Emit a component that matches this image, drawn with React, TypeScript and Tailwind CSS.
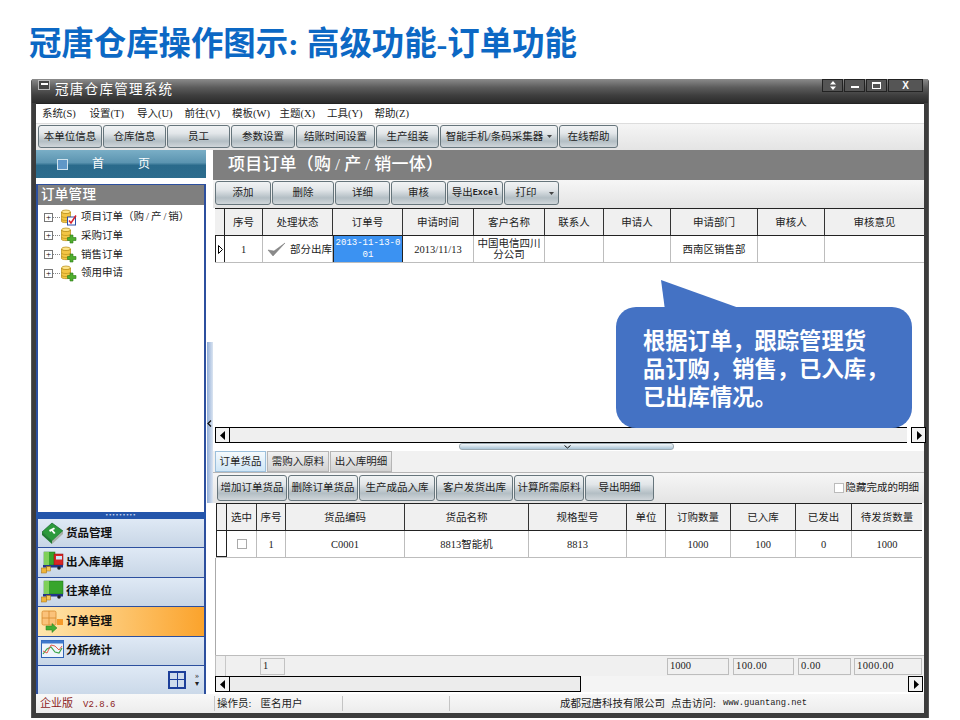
import type { ReactNode } from 'react';

const BTN =
  'flex items-center justify-center h-full rounded-[3px] border border-[#66757c] bg-[linear-gradient(to_bottom,#f1f3f4_0%,#e2e6e9_35%,#b3bec4_72%,#d0d6da_100%)] text-[10.5px] text-[#222] whitespace-nowrap';

const topButtons = [
  { label: '本单位信息', w: 'w-[64px]' },
  { label: '仓库信息', w: 'w-[63px]' },
  { label: '员工', w: 'w-[63px]' },
  { label: '参数设置', w: 'w-[64px]' },
  { label: '结账时间设置', w: 'w-[79px]' },
  { label: '生产组装', w: 'w-[63px]' },
];

const menus = ['系统(S)', '设置(T)', '导入(U)', '前往(V)', '模板(W)', '主题(X)', '工具(Y)', '帮助(Z)'];

const orderHead = ['序号', '处理状态', '订单号', '申请时间', '客户名称', '联系人', '申请人', '申请部门', '审核人', '审核意见'];
const goodsHead = ['选中', '序号', '货品编码', '货品名称', '规格型号', '单位', '订购数量', '已入库', '已发出', '待发货数量'];
const goodsRow = ['1', 'C0001', '8813智能机', '8813', '', '1000', '100', '0', '1000'];

const ORDER_COLS = 'grid grid-cols-[10px_38px_70px_70px_71px_71px_59px_67px_87px_67px_99px]';
const GOODS_COLS = 'grid grid-cols-[11px_30px_29px_119px_124px_98px_39px_65px_65px_56px_70px]';

function Arrow({ dir }: { dir: 'left' | 'right' }) {
  return (
    <svg width="6" height="9" viewBox="0 0 6 9">
      <path d={dir === 'left' ? 'M5 0V9L0 4.5Z' : 'M1 0V9L6 4.5Z'} fill="#000" />
    </svg>
  );
}

function ScrollButton({ dir }: { dir: 'left' | 'right' }) {
  return (
    <div className="flex items-center justify-center w-[15px] h-full border border-black bg-[#f2f2f2] shrink-0">
      <Arrow dir={dir} />
    </div>
  );
}

function Caret() {
  return (
    <svg width="5" height="3" viewBox="0 0 5 3" className="ml-[4px]">
      <path d="M0 0H5L2.5 3Z" fill="#444" />
    </svg>
  );
}

function FolderIcon({ badge }: { badge: 'check' | 'plus' }) {
  return (
    <svg width="17" height="17" viewBox="0 0 17 17" className="shrink-0">
      <ellipse cx="6" cy="3" rx="4.5" ry="2" fill="#ffe58a" stroke="#b58a12" strokeWidth="0.7" />
      <path d="M1.5 3V12.5C1.5 14 10.5 14 10.5 12.5V3C10.5 5 1.5 5 1.5 3Z" fill="#f3c545" stroke="#b58a12" strokeWidth="0.7" />
      <path d="M1.5 7C1.5 9 10.5 9 10.5 7M1.5 10C1.5 12 10.5 12 10.5 10" fill="none" stroke="#b58a12" strokeWidth="0.6" />
      {badge === 'check' ? (
        <g>
          <rect x="7.5" y="8" width="8" height="8" fill="#fff" stroke="#2c4fa8" />
          <path d="M9 11.5L11 14L16 6.5" fill="none" stroke="#d8202a" strokeWidth="1.5" />
        </g>
      ) : (
        <path d="M10 8H13V10.5H16V13.5H13V16H10V13.5H7.5V10.5H10Z" fill="#4fae2e" stroke="#2b7a18" strokeWidth="0.6" />
      )}
    </svg>
  );
}

function BookIcon() {
  return (
    <svg width="23" height="23" viewBox="0 0 23 23">
      <path d="M1 10L11 1L22 9L11 19Z" fill="#2c9a3c" stroke="#12652a" strokeWidth="0.7" />
      <path d="M1 10V13L11 22V19Z" fill="#1f7a31" />
      <path d="M11 19V22L22 12V9Z" fill="#a8b0a8" />
      <path d="M8 8L13 5.5L14 7L12 8L14.5 11L13 12L10.5 9L9 10Z" fill="#fff" />
    </svg>
  );
}

function TruckIcon({ red }: { red?: boolean }) {
  return (
    <svg width="23" height="23" viewBox="0 0 23 23">
      <rect x="3" y="1" width={red ? 11 : 19} height="13" fill="#37a52c" stroke="#1d6f18" strokeWidth="0.5" />
      <rect x="3" y="1" width="5" height="13" fill="#7fd05a" />
      {red && (
        <g>
          <rect x="13" y="3" width="9" height="11" fill="#d82626" stroke="#861010" strokeWidth="0.5" />
          <rect x="15" y="5" width="6" height="3.5" fill="#cfe6f8" />
        </g>
      )}
      <rect x="2" y="14" width="20" height="2.5" fill="#23368a" />
      <circle cx="7" cy="17" r="1.8" fill="#222" />
      <circle cx="18" cy="17" r="1.8" fill="#222" />
      <rect x="0.5" y="17" width="5" height="5" fill="#f0b43a" stroke="#a06d10" strokeWidth="0.5" />
      <rect x="5.5" y="15.5" width="4" height="4.5" fill="#f6c75a" stroke="#a06d10" strokeWidth="0.5" />
    </svg>
  );
}

function OrderIcon() {
  return (
    <svg width="23" height="23" viewBox="0 0 23 23">
      <rect x="1" y="1" width="14" height="14" rx="1.5" fill="#fbc27a" stroke="#d88a2e" strokeWidth="0.8" />
      <path d="M8 1V15M1 8H15" stroke="#d88a2e" strokeWidth="0.8" />
      <rect x="16" y="9" width="6" height="6" fill="#f59a2c" />
      <path d="M5 16H11V13.5L16 18L11 22.5V20H5Z" fill="#44ad35" stroke="#26791f" strokeWidth="0.5" />
    </svg>
  );
}

function ChartIcon() {
  return (
    <svg width="23" height="21" viewBox="0 0 23 21">
      <rect x="0.5" y="0.5" width="22" height="17" fill="#eef4fb" stroke="#2f63b5" />
      <rect x="0.5" y="0.5" width="22" height="3" fill="#3f78cc" />
      <path d="M2 14L6 9L10 7L14 12L18 13L21 8" fill="none" stroke="#3ca54a" strokeWidth="1.2" />
      <path d="M2 11L6 13L10 5L14 6L18 10L21 6" fill="none" stroke="#e25b4a" strokeWidth="1" />
    </svg>
  );
}

const navItems: { label: string; icon: ReactNode; active?: boolean }[] = [
  { label: '货品管理', icon: <BookIcon /> },
  { label: '出入库单据', icon: <TruckIcon red /> },
  { label: '往来单位', icon: <TruckIcon /> },
  { label: '订单管理', icon: <OrderIcon />, active: true },
  { label: '分析统计', icon: <ChartIcon /> },
];

const treeItems: { label: ReactNode; key: string; badge: 'check' | 'plus' }[] = [
  {
    key: 'project',
    label: (
      <>
        项目订单（购<span className="mx-[2px]">/</span>产<span className="mx-[2px]">/</span>销）
      </>
    ),
    badge: 'check',
  },
  { key: 'purchase', label: '采购订单', badge: 'plus' },
  { key: 'sale', label: '销售订单', badge: 'plus' },
  { key: 'use', label: '领用申请', badge: 'plus' },
];

function LeftPanel() {
  return (
    <div className="flex flex-col w-[170px] h-full shrink-0">
      <div className="flex items-center h-[28px] shrink-0 bg-[linear-gradient(to_bottom,#7aaec6_0%,#5b94b0_45%,#2a6a8b_55%,#2c6c8d_100%)] text-white text-[12px]">
        <span className="ml-[21px] w-[11px] h-[11px] border border-[#cfe3ee] bg-[#5f97c7]" />
        <span className="ml-[24px] w-[46px]">首</span>
        <span>页</span>
      </div>
      <div className="h-[6px] shrink-0 bg-white" />
      <div className="flex flex-col h-[328px] shrink-0 border-x-2 border-t border-[#2c4f9e]">
        <div className="flex items-center h-[20px] pl-[3px] bg-[#7f7f7f] text-white text-[13.5px] font-medium tracking-[0.3px]">
          订单管理
        </div>
        <div className="flex flex-col pt-[3px] pl-[6px] bg-white flex-1">
          {treeItems.map((item) => (
            <div key={item.key} className="flex items-center h-[18.6px]">
              <span className="flex items-center justify-center w-[9px] h-[9px] border border-[#777] text-[9px] leading-none text-black">
                +
              </span>
              <span className="w-[7px] border-t border-dotted border-[#888]" />
              <FolderIcon badge={item.badge} />
              <span className="ml-[4px] text-[10.5px] text-[#222]">{item.label}</span>
            </div>
          ))}
        </div>
      </div>
      <div className="flex items-center justify-center h-[7px] shrink-0 bg-[#2355ab]">
        <span className="text-[7px] leading-none tracking-[1px] text-[#cfdcf0]">•••••••••</span>
      </div>
      <div className="flex flex-col flex-1 border-x-2 border-[#2c4f9e]">
        {navItems.map((item) => (
          <div
            key={item.label}
            className={
              item.active
                ? 'flex items-center h-[29.4px] pl-[3px] gap-[2px] border-b border-[#2c4f9e] bg-[linear-gradient(to_right,#ffe6ae,#fba32c)]'
                : 'flex items-center h-[29.4px] pl-[3px] gap-[2px] border-b border-[#2c4f9e] bg-[linear-gradient(to_bottom,#dfe9f5,#c8d6e6)]'
            }
          >
            {item.icon}
            <span className="text-[11.5px] font-bold text-[#111]">{item.label}</span>
          </div>
        ))}
        <div className="flex items-center justify-end flex-1 pr-[5px] gap-[9px] bg-[linear-gradient(to_bottom,#dfe9f5,#cbd9e9)]">
          <div className="grid grid-cols-2 gap-[1px] w-[18px] h-[18px] p-[1px] border border-[#1c3f9a] bg-[#1c3f9a]">
            <span className="bg-[#cfdcec]" />
            <span className="bg-[#cfdcec]" />
            <span className="bg-[#cfdcec]" />
            <span className="bg-[#cfdcec]" />
          </div>
          <div className="flex flex-col items-center text-[8px] leading-[8px] text-[#222]">
            <span>»</span>
            <span>▾</span>
          </div>
        </div>
      </div>
    </div>
  );
}

function Splitter() {
  return (
    <div className="flex flex-col w-[7px] shrink-0 bg-white">
      <div className="h-[192px]" />
      <div className="relative w-[6px] ml-[1px] h-[161px] bg-[linear-gradient(to_right,#8fabd6,#dbe5f1)]">
        <svg width="5" height="7" viewBox="0 0 5 7" className="absolute left-0 top-[78px]">
          <path d="M4 0.5L1 3.5L4 6.5" fill="none" stroke="#111" strokeWidth="1.3" />
        </svg>
      </div>
    </div>
  );
}

function OrderTable() {
  return (
    <div className="text-[10.5px] text-[#222] ml-[2px] w-[709px]">
      <div className={`${ORDER_COLS} h-[28px] border-y border-[#222] bg-[#f0f0f0]`}>
        <div className="border-r border-[#222]" />
        {orderHead.map((h) => (
          <div key={h} className="flex items-center justify-center pt-[1px] border-r border-[#333] last:border-r-0">
            {h}
          </div>
        ))}
      </div>
      <div className={`${ORDER_COLS} h-[27px] border-b border-[#bdbdbd] bg-white`}>
        <div className="flex items-center justify-center border-x border-[#222]">
          <svg width="5" height="9" viewBox="0 0 5 9">
            <path d="M0.5 0.5V8.5L4.5 4.5Z" fill="none" stroke="#000" />
          </svg>
        </div>
        <div className="flex items-center justify-center pt-[1px] border-r border-[#bdbdbd]">1</div>
        <div className="flex items-center gap-[4px] pl-[4px] pt-[1px] border-r border-[#bdbdbd]">
          <svg width="19" height="15" viewBox="0 0 19 15">
            <path d="M1 8L6 14L18 1L7 9Z" fill="#8a8a8a" stroke="#777" strokeWidth="0.5" />
          </svg>
          部分出库
        </div>
        <div className="flex items-center justify-center text-center bg-[#3b92f2] text-white font-['Liberation_Mono'] text-[9px] leading-[12px] break-all border-r border-[#222] border-l border-l-[#222]">
          2013-11-13-0
          <br />
          01
        </div>
        <div className="flex items-center justify-center pt-[1px] border-r border-[#bdbdbd]">2013/11/13</div>
        <div className="flex items-center justify-center text-center leading-[11px] border-r border-[#bdbdbd]">
          中国电信四川
          <br />
          分公司
        </div>
        <div className="border-r border-[#bdbdbd]" />
        <div className="border-r border-[#bdbdbd]" />
        <div className="flex items-center justify-center pt-[1px] border-r border-[#bdbdbd]">西南区销售部</div>
        <div className="border-r border-[#bdbdbd]" />
        <div />
      </div>
    </div>
  );
}

function GoodsTable() {
  return (
    <div className="text-[10.5px] text-[#222] ml-[3px] w-[706px]">
      <div className={`${GOODS_COLS} h-[28px] border-y border-[#222] bg-[#f0f0f0]`}>
        <div className="border-x border-[#222]" />
        {goodsHead.map((h) => (
          <div key={h} className="flex items-center justify-center pt-[1px] border-r border-[#333] last:border-r-0">
            {h}
          </div>
        ))}
      </div>
      <div className={`${GOODS_COLS} h-[27px] border-b border-[#bdbdbd] bg-white`}>
        <div className="border-x border-[#222] border-b border-b-[#222]" />
        <div className="flex items-center justify-center border-r border-[#bdbdbd]">
          <span className="w-[10px] h-[10px] border border-[#aaa] bg-white" />
        </div>
        {goodsRow.map((v, i) => (
          <div key={i} className="flex items-center justify-center pt-[1px] border-r border-[#bdbdbd] last:border-r-0">
            {v}
          </div>
        ))}
      </div>
    </div>
  );
}

function RightPanel() {
  return (
    <div className="flex flex-col flex-1 min-w-0 bg-white">
      <div className="flex items-center h-[30px] shrink-0 pl-[15px] bg-[#7f7f7f] text-white text-[17px] font-medium tracking-[0.2px]">
        项目订单（购<span className="mx-[4px]">/</span>产<span className="mx-[4px]">/</span>销一体）
      </div>
      <div className="flex h-[28px] shrink-0 pt-[1px] pb-[3px] pl-[2px] gap-[1px] bg-[linear-gradient(to_bottom,#f6f6f6,#e4e4e4)]">
        <div className={`${BTN} w-[56px]`}>添加</div>
        <div className={`${BTN} w-[62px]`}>删除</div>
        <div className={`${BTN} w-[55px]`}>详细</div>
        <div className={`${BTN} w-[55px]`}>审核</div>
        <div className={`${BTN} w-[56px]`}>
          导出<span className="font-['Liberation_Mono'] text-[8.5px] font-bold">Excel</span>
        </div>
        <div className={`${BTN} w-[55px]`}>
          <span className="ml-[6px]">打印</span>
          <span className="ml-[8px]">
            <Caret />
          </span>
        </div>
      </div>
      <OrderTable />
      <div className="flex-1 bg-white" />
      <div className="flex h-[16px] shrink-0 ml-[2px] w-[711px] mt-0">
        <ScrollButton dir="left" />
        <div className="flex-1 border-y border-black bg-[#efefef]" />
        <div className="w-[4px] bg-white" />
        <ScrollButton dir="right" />
      </div>
      <div className="flex justify-center h-[8px] shrink-0 pr-[5px] bg-white">
        <div className="relative w-[215px] h-[7px] rounded-[3px] border border-[#9aa8b0] bg-[linear-gradient(to_bottom,#f4f7f9,#a9c4d6)]">
          <svg width="7" height="4" viewBox="0 0 7 4" className="absolute left-[104px] top-[1px]">
            <path d="M0.5 0.5L3.5 3L6.5 0.5" fill="none" stroke="#111" />
          </svg>
        </div>
      </div>
      <div className="flex h-[22px] shrink-0 pl-[2px] gap-[1px] border-b border-[#b5b5b5] bg-[#f1f1f1] text-[10.5px] text-[#222]">
        <div className="flex items-center justify-center w-[51px] border border-[#9cc0dc] bg-[linear-gradient(to_bottom,#f5fafd,#cfe6f6)]">
          订单货品
        </div>
        <div className="flex items-center justify-center w-[62px] border border-[#b5b5b5] bg-[linear-gradient(to_bottom,#f0f0f0,#d2d2d2)]">
          需购入原料
        </div>
        <div className="flex items-center justify-center w-[62px] border border-[#b5b5b5] bg-[linear-gradient(to_bottom,#f0f0f0,#d2d2d2)]">
          出入库明细
        </div>
      </div>
      <div className="flex items-center h-[30px] shrink-0 pt-[2px] pb-[2px] pl-[4px] pr-[5px] gap-[1px] bg-[linear-gradient(to_bottom,#f6f6f6,#e4e4e4)]">
        <div className={`${BTN} w-[70px]`}>增加订单货品</div>
        <div className={`${BTN} w-[70px]`}>删除订单货品</div>
        <div className={`${BTN} w-[76px]`}>生产成品入库</div>
        <div className={`${BTN} w-[77px]`}>客户发货出库</div>
        <div className={`${BTN} w-[70px]`}>计算所需原料</div>
        <div className={`${BTN} w-[69px]`}>导出明细</div>
        <div className="flex items-center ml-auto text-[10.5px] text-[#222]">
          <span className="w-[10px] h-[10px] mr-[2px] border border-[#bbb] bg-white" />
          隐藏完成的明细
        </div>
      </div>
      <GoodsTable />
      <div className="h-[97px] shrink-0 ml-[2px] border-l border-[#aaa] bg-white" />
      <div className="flex items-center h-[21px] shrink-0 ml-[2px] border-l border-t border-[#bdbdbd] bg-[#f0f0f0] text-[10.5px] text-[#222]">
        <div className="w-[10px] h-full border-r border-[#c8c8c8]" />
        <div className="flex items-center w-[25px] h-[17px] ml-[34px] pl-[2px] border border-[#c2c2c2]">1</div>
        <div className="flex items-center w-[62px] h-[17px] ml-[382px] pl-[2px] border border-[#bdbdbd]">1000</div>
        <div className="flex items-center w-[61px] h-[17px] ml-[4px] pl-[2px] border border-[#bdbdbd] tracking-[0.4px]">100.00</div>
        <div className="flex items-center w-[53px] h-[17px] ml-[4px] pl-[2px] border border-[#bdbdbd] tracking-[0.4px]">0.00</div>
        <div className="flex items-center w-[68px] h-[17px] ml-[3px] pl-[2px] border border-[#bdbdbd] tracking-[0.4px]">1000.00</div>
      </div>
      <div className="flex h-[16px] shrink-0 ml-[2px] w-[708px]">
        <ScrollButton dir="left" />
        <div className="w-[351px] border-y border-r border-black bg-[#ececec]" />
        <div className="flex-1 bg-[#f4f4f4]" />
        <ScrollButton dir="right" />
      </div>
      <div className="h-[2px] shrink-0 bg-white" />
    </div>
  );
}

function StatusBar() {
  return (
    <div className="flex items-center h-[19px] shrink-0 bg-[linear-gradient(to_bottom,#f8f8f8,#ececec)] text-[10.5px] text-[#222]">
      <span className="w-[178px] pl-[4px] text-[#8c1c1c]">
        <span className="text-[11px]">企业版</span>
        <span className="ml-[10px] font-['Liberation_Mono'] text-[9px]">V2.8.6</span>
      </span>
      <span className="flex items-center w-[128px] h-[15px] pl-[2px] border-l border-[#c4c4c4]">
        操作员:<span className="ml-[9px]">匿名用户</span>
      </span>
      <span className="w-[107px] h-[15px] border-l border-[#c4c4c4]" />
      <span className="flex items-center flex-1 h-[15px] pl-[110px] border-l border-[#c4c4c4]">
        成都冠唐科技有限公司
        <span className="ml-[6px]">点击访问:</span>
        <span className="ml-[7px] font-['Liberation_Mono'] text-[8.75px]">www.guantang.net</span>
      </span>
    </div>
  );
}

function Callout() {
  return (
    <div className="absolute left-[616px] top-[280px] w-[296px] h-[148px]">
      <svg width="80" height="30" viewBox="0 0 80 30" className="absolute left-[44px] top-0">
        <path d="M1 0L79 28V30H5Z" fill="#4472c4" />
      </svg>
      <div className="absolute left-0 top-[27px] flex flex-col justify-center w-[296px] h-[121px] pl-[27px] pt-[4px] rounded-[20px] bg-[#4472c4] text-white text-[22.3px] leading-[28px] font-bold whitespace-nowrap">
        <div>根据订单，跟踪管理货</div>
        <div>品订购，销售，已入库，</div>
        <div>已出库情况。</div>
      </div>
    </div>
  );
}

export default function App() {
  return (
    <div className="relative w-[960px] h-[720px] overflow-hidden bg-white [font-family:'Liberation_Serif','Noto_Sans_CJK_SC',sans-serif]">
      <h1 className="h-[79px] pl-[29px] pt-[21px] text-[32.4px] leading-[46px] font-bold text-[#0c68c4] whitespace-nowrap">
        冠唐仓库操作图示: 高级功能-订单功能
      </h1>
      <div className="flex flex-col w-[898px] h-[639px] ml-[31px] pb-[5px] rounded-t-[3px] bg-[#3c3c3c] border-x border-[#555]">
        <div className="flex items-start justify-between h-[24px] shrink-0 bg-[linear-gradient(to_bottom,#8b8b8b_0%,#5c5c5c_35%,#3d3d3d_70%,#2b2b2b_100%)]">
          <div className="flex items-start h-[22px] pl-[6px] pt-[1px]">
            <span className="flex justify-center w-[12px] h-[10px] pt-[2px] border border-[#bbb] bg-[#444]">
              <span className="w-[7px] h-[2px] bg-white" />
            </span>
            <span className="ml-[5px] text-[13.5px] leading-[20px] tracking-[1.3px] text-white">冠唐仓库管理系统</span>
          </div>
          <div className="flex h-[13px] mr-[5px] gap-[1px]">
            <div className="flex items-center justify-center w-[21px] border border-[#222] bg-[#555]">
              <svg width="6" height="9" viewBox="0 0 6 9">
                <path d="M3 0L6 3.5H0ZM3 9L0 5.5H6Z" fill="#fff" />
              </svg>
            </div>
            <div className="flex items-end justify-center w-[21px] pb-[3px] border border-[#222] bg-[#555]">
              <span className="w-[8px] h-[2px] bg-white" />
            </div>
            <div className="flex items-center justify-center w-[21px] border border-[#222] bg-[#555]">
              <span className="w-[9px] h-[7px] border border-t-2 border-white" />
            </div>
            <div className="flex items-center justify-center w-[35px] border border-[#222] bg-[#555] text-[10px] leading-none font-bold text-white [font-family:'Liberation_Sans',sans-serif]">
              X
            </div>
          </div>
        </div>
        <div className="flex flex-col flex-1 min-h-0 mx-[4px]">
          <div className="flex items-center h-[20px] shrink-0 pl-[6px] bg-white border-t border-[#222] text-[10.5px] text-[#222]">
            {menus.map((m) => (
              <span key={m} className="w-[47.5px] shrink-0 whitespace-nowrap">
                {m}
              </span>
            ))}
          </div>
          <div className="flex h-[27px] shrink-0 pt-[1px] pb-[2px] pl-[2px] gap-[1px] border-t border-[#ddd] bg-[linear-gradient(to_bottom,#f5f5f5,#e4e4e4)]">
            {topButtons.map((b) => (
              <div key={b.label} className={`${BTN} ${b.w}`}>
                {b.label}
              </div>
            ))}
            <div className={`${BTN} w-[118px]`}>
              智能手机/条码采集器
              <Caret />
            </div>
            <div className={`${BTN} w-[59px]`}>在线帮助</div>
          </div>
          <div className="flex h-[544px] shrink-0">
            <LeftPanel />
            <Splitter />
            <RightPanel />
          </div>
          <StatusBar />
        </div>
      </div>
      <Callout />
    </div>
  );
}
